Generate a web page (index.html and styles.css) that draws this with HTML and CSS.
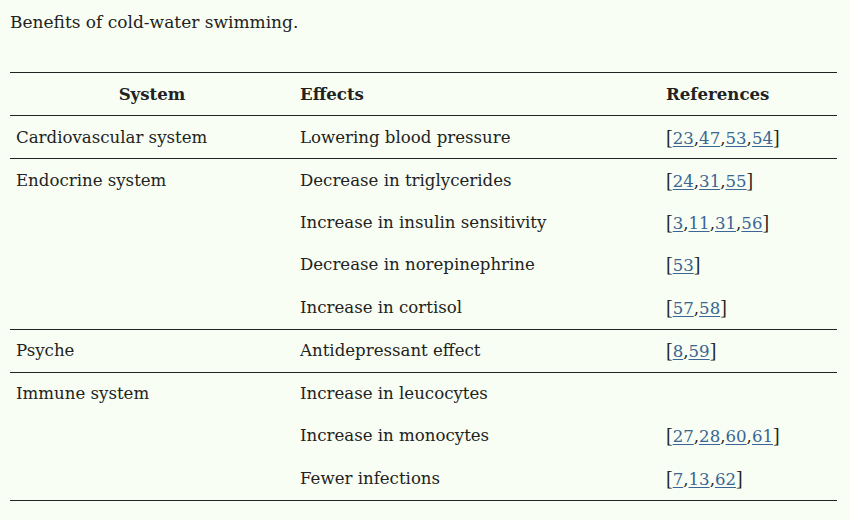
FILE: index.html
```html
<!DOCTYPE html>
<html>
<head>
<meta charset="utf-8">
<link rel="stylesheet" href="styles.css">
</head>
<body>
<div class="wrap">
  <p class="caption">Benefits of cold-water swimming.</p>
  <table class="tbl">
    <colgroup>
      <col class="c1"><col class="c2"><col class="c3">
    </colgroup>
    <thead>
      <tr><th class="center">System</th><th>Effects</th><th>References</th></tr>
    </thead>
    <tbody>
      <tr><td>Cardiovascular system</td><td>Lowering blood pressure</td><td><span class="br">[</span><a href="#">23</a>,<a href="#">47</a>,<a href="#">53</a>,<a href="#">54</a><span class="br">]</span></td></tr>
    </tbody>
    <tbody>
      <tr><td>Endocrine system</td><td>Decrease in triglycerides</td><td><span class="br">[</span><a href="#">24</a>,<a href="#">31</a>,<a href="#">55</a><span class="br">]</span></td></tr>
      <tr><td></td><td>Increase in insulin sensitivity</td><td><span class="br">[</span><a href="#">3</a>,<a href="#">11</a>,<a href="#">31</a>,<a href="#">56</a><span class="br">]</span></td></tr>
      <tr><td></td><td>Decrease in norepinephrine</td><td><span class="br">[</span><a href="#">53</a><span class="br">]</span></td></tr>
      <tr><td></td><td>Increase in cortisol</td><td><span class="br">[</span><a href="#">57</a>,<a href="#">58</a><span class="br">]</span></td></tr>
    </tbody>
    <tbody>
      <tr><td>Psyche</td><td>Antidepressant effect</td><td><span class="br">[</span><a href="#">8</a>,<a href="#">59</a><span class="br">]</span></td></tr>
    </tbody>
    <tbody>
      <tr><td>Immune system</td><td>Increase in leucocytes</td><td></td></tr>
      <tr><td></td><td>Increase in monocytes</td><td><span class="br">[</span><a href="#">27</a>,<a href="#">28</a>,<a href="#">60</a>,<a href="#">61</a><span class="br">]</span></td></tr>
      <tr><td></td><td>Fewer infections</td><td><span class="br">[</span><a href="#">7</a>,<a href="#">13</a>,<a href="#">62</a><span class="br">]</span></td></tr>
    </tbody>
  </table>
</div>
</body>
</html>
```
FILE: styles.css
```css
html, body {
  margin: 0;
  padding: 0;
  background: #f8fef3;
}
body {
  font-family: "DejaVu Serif", "Liberation Serif", serif;
  font-size: 16.6px;
  color: #222;
}
.wrap {
  padding: 9px 13px 0 10px;
}
.caption {
  margin: 0;
  font-size: 17px;
  line-height: 26px;
  height: 63px;
}
.tbl {
  width: 827px;
  border-collapse: collapse;
  table-layout: fixed;
  border-top: 1px solid #222;
  border-bottom: 1px solid #222;
}
.c1 { width: 284px; }
.c2 { width: 366px; }
.c3 { width: 177px; }
.tbl th, .tbl td {
  height: 42px;
  padding: 0 6px;
  text-align: left;
  vertical-align: middle;
  white-space: nowrap;
}
.tbl tbody tr + tr td {
  height: 42.5px;
}
.tbl th {
  font-weight: bold;
}
.tbl th.center {
  text-align: center;
}
.tbl tbody {
  border-top: 1px solid #222;
}
.tbl a {
  color: #3a6594;
  text-decoration: underline;
  text-underline-offset: 2px;
}
.br {
  font-family: "Liberation Serif", serif;
  font-size: 20px;
}
```
